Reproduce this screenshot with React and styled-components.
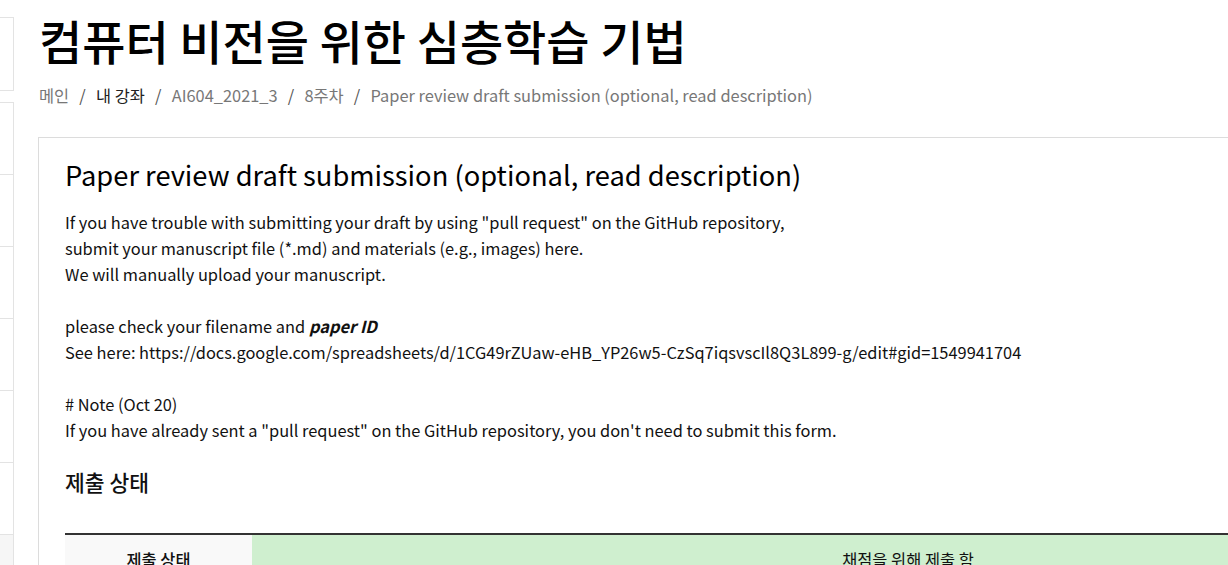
import React from 'react';
import styled, { createGlobalStyle } from 'styled-components';

const GlobalStyle = createGlobalStyle`
  html, body {
    margin: 0;
    padding: 0;
    background: #fff;
    overflow: hidden;
  }
  body {
    font-family: "Noto Sans CJK KR", "Noto Sans", sans-serif;
    color: #111;
  }
`;

const Page = styled.div`
  display: flex;
  align-items: flex-start;
  width: 1700px;
  height: 565px;
`;

const Sidebar = styled.aside`
  width: 14px;
  flex-shrink: 0;
  padding-top: 17px;
  display: flex;
  flex-direction: column;
  gap: 11px;
`;

const SideBox = styled.div`
  border: 1px solid #e3e3e3;
  border-left: none;
  display: flex;
  flex-direction: column;
`;

const SideItem = styled.div`
  height: ${(p) => p.$h || 71}px;
  background: ${(p) => (p.$active ? '#f6f6f6' : '#fff')};
  & + & {
    border-top: 1px solid #e3e3e3;
  }
`;

const Main = styled.main`
  flex: 1;
  padding-left: 25px;
  padding-top: 8px;
`;

const CourseTitle = styled.h1`
  margin: 0;
  font-size: 47px;
  font-weight: 500;
  line-height: 64px;
  color: #000;
`;

const Crumbs = styled.nav`
  display: flex;
  align-items: center;
  gap: 10.2px;
  margin-top: 11px;
  font-size: 16.4px;
  line-height: 24px;
  color: #777;
`;

const Crumb = styled.span`
  color: ${(p) => (p.$strong ? '#222' : '#777')};
`;

const Sep = styled.span`
  color: #555;
`;

const Card = styled.section`
  margin-top: 30px;
  margin-left: -1px;
  border: 1px solid #dcdcdc;
  padding: 14px 26px 0 26px;
  width: 1499px;
  height: 600px;
`;

const CardTitle = styled.h2`
  margin: 0;
  font-size: 27.3px;
  font-weight: 400;
  line-height: 44px;
  color: #000;
`;

const Description = styled.div`
  margin-top: 13px;
  font-size: 16.4px;
  line-height: 26px;
  color: #111;
`;

const Line = styled.p`
  margin: 0;
  min-height: 26px;
`;

const Em = styled.em`
  font-weight: 700;
`;

const SectionTitle = styled.h3`
  margin: 24px 0 0 0;
  font-size: 21.5px;
  font-weight: 500;
  line-height: 30px;
  color: #111;
`;

const StatusTable = styled.div`
  margin-top: 36px;
  border-top: 2px solid #333;
  display: grid;
  grid-template-columns: 187px 1fr;
`;

const HeadCell = styled.div`
  background: #f9f9f9;
  text-align: center;
  font-size: 16.4px;
  font-weight: 500;
  padding: 12px 8px;
  line-height: 24px;
  color: #111;
`;

const ValueCell = styled.div`
  background: ${(p) => p.$bg || '#fff'};
  text-align: center;
  font-size: 16.4px;
  padding: 12px 8px;
  line-height: 24px;
  color: #111;
`;

const sideRows = [0, 1, 2, 3, 4, 5, 6];

export default function App() {
  return (
    <>
      <GlobalStyle />
      <Page>
        <Sidebar>
          <SideBox>
            <SideItem $h={72} />
          </SideBox>
          <SideBox>
            {sideRows.map((i) => (
              <SideItem key={i} $active={i === 6} />
            ))}
          </SideBox>
        </Sidebar>
        <Main>
          <CourseTitle>컴퓨터 비전을 위한 심층학습 기법</CourseTitle>
          <Crumbs>
            <Crumb>메인</Crumb>
            <Sep>/</Sep>
            <Crumb $strong>내 강좌</Crumb>
            <Sep>/</Sep>
            <Crumb>AI604_2021_3</Crumb>
            <Sep>/</Sep>
            <Crumb>8주차</Crumb>
            <Sep>/</Sep>
            <Crumb>Paper review draft submission (optional, read description)</Crumb>
          </Crumbs>
          <Card>
            <CardTitle>Paper review draft submission (optional, read description)</CardTitle>
            <Description>
              <Line>If you have trouble with submitting your draft by using "pull request" on the GitHub repository,</Line>
              <Line>submit your manuscript file (*.md) and materials (e.g., images) here.</Line>
              <Line>We will manually upload your manuscript.</Line>
              <Line />
              <Line>
                please check your filename and <Em>paper ID</Em>
              </Line>
              <Line>See here: https://docs.google.com/spreadsheets/d/1CG49rZUaw-eHB_YP26w5-CzSq7iqsvscIl8Q3L899-g/edit#gid=1549941704</Line>
              <Line />
              <Line># Note (Oct 20)</Line>
              <Line>If you have already sent a "pull request" on the GitHub repository, you don't need to submit this form.</Line>
            </Description>
            <SectionTitle>제출 상태</SectionTitle>
            <StatusTable>
              <HeadCell>제출 상태</HeadCell>
              <ValueCell $bg="#cfefcf">채점을 위해 제출 함</ValueCell>
            </StatusTable>
          </Card>
        </Main>
      </Page>
    </>
  );
}
